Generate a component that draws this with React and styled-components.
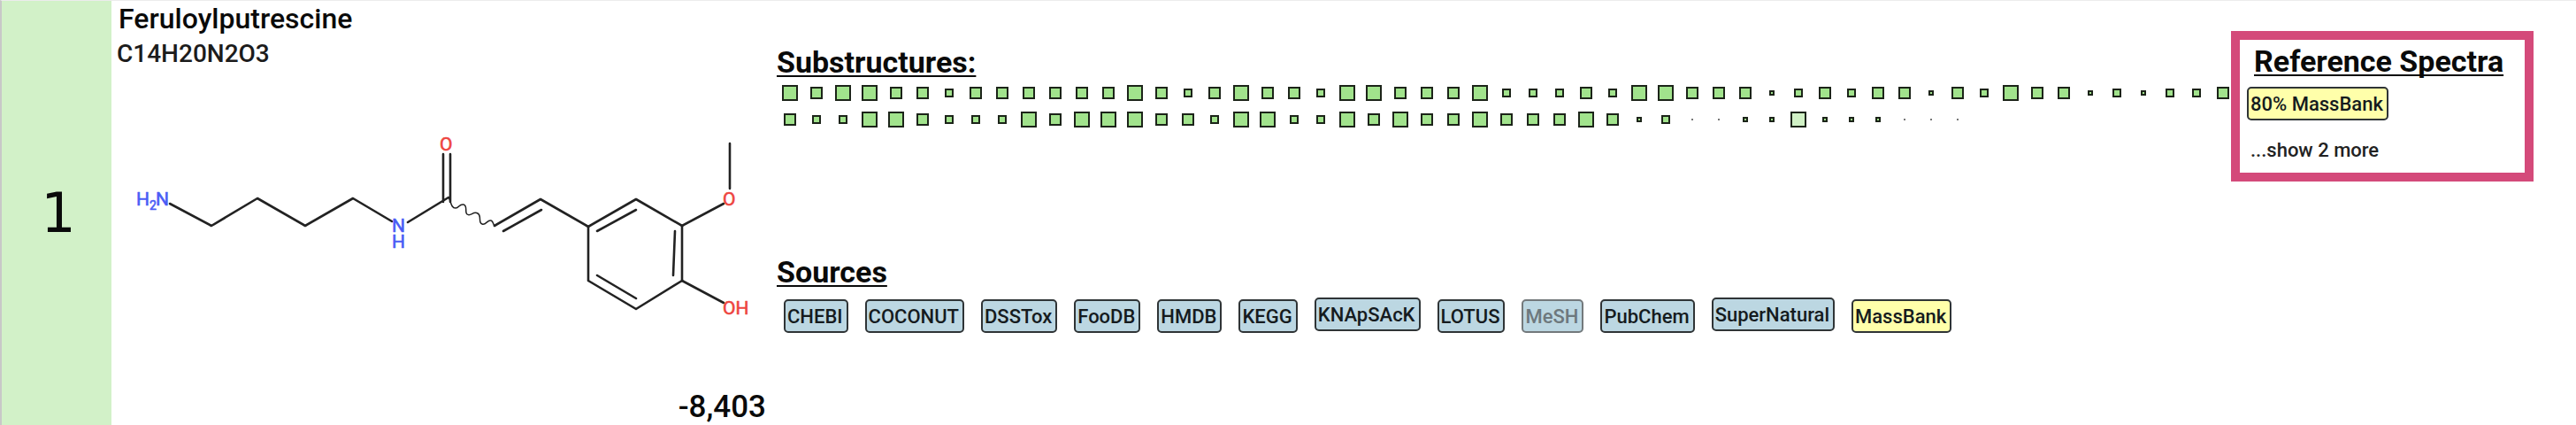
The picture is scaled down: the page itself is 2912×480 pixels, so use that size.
import React from "react";
import styled, { createGlobalStyle } from "styled-components";

const GlobalStyle = createGlobalStyle`
  *, *::before, *::after { box-sizing: border-box; }
  body {
    margin: 0;
    background: #fff;
    color: #0a0a0a;
    font-family: Roboto, "Liberation Sans", sans-serif;
    font-weight: 500;
  }
  h2, h3, p, ul { margin: 0; padding: 0; }
  button { font: inherit; color: inherit; cursor: pointer; }
`;

const CandidateRow = styled.article`
  display: flex;
  min-height: 100vh;
  border-top: 1px solid #ececec;
  border-left: 2px solid #c8c8c8;
`;

const Rank = styled.div`
  flex: 0 0 124px;
  display: flex;
  align-items: center;
  justify-content: center;
  padding-left: 4px;
  background: #d2f1c8;
  font: 400 62px/72px "DejaVu Sans", sans-serif;
`;

const StructurePanel = styled.section`
  flex: 0 0 752px;
  display: flex;
  flex-direction: column;
  padding: 0 12px 0 6px;
`;

const Name = styled.h2`
  padding-left: 2px;
  font-size: 32px;
  line-height: 40px;
  font-weight: 500;
`;

const Formula = styled.p`
  font-size: 28px;
  line-height: 40px;
  color: #1c1c1c;
`;

const Molecule = styled.svg`
  display: block;
  width: 720px;
  height: 230px;
  margin: 59px 0 0 8px;
  overflow: visible;
  fill: none;
  stroke: #222;
  stroke-width: 2.6;
  stroke-linecap: round;
  stroke-linejoin: round;
`;

const Atom = styled.text`
  font: 400 21px Roboto, sans-serif;
  fill: ${(p) => p.$color};
  stroke: ${(p) => p.$color};
  stroke-width: 0.6;
`;

const Subscript = styled.tspan`
  font-size: 14px;
`;

const Score = styled.p`
  margin-top: auto;
  align-self: flex-end;
  font-size: 35px;
  line-height: 40px;
`;

const Details = styled.div`
  flex: 1 1 0;
  min-width: 0;
  padding-top: 49px;
`;

const Heading = styled.h3`
  font-size: 34px;
  line-height: 40px;
  font-weight: 700;
  text-decoration: underline;
  text-decoration-thickness: 2px;
  text-underline-offset: 3px;
  text-decoration-skip-ink: none;
`;

const Fingerprint = styled.div`
  display: grid;
  grid-template-columns: repeat(auto-fill, 30px);
  grid-auto-rows: 30px;
  place-items: center;
  min-height: 197px;
  align-content: start;
`;

const Square = styled.span`
  width: ${(p) => p.$size}px;
  height: ${(p) => p.$size}px;
  border: ${(p) => (p.$size > 2 ? "2px solid #1c2419" : "1px solid #777")};
  background: ${(p) => p.$fill};
`;

const ChipList = styled.ul`
  display: flex;
  flex-wrap: wrap;
  gap: 19px;
  padding: 11px 8px 0;
  list-style: none;
`;

const ChipItem = styled.li`
  margin-top: ${(p) => (p.$raised ? -2 : 0)}px;
`;

const Chip = styled.button`
  display: block;
  height: 38px;
  padding: 2px 4px 0 2px;
  border: 2px solid #2f3436;
  border-radius: 5px;
  background: ${(p) => (p.$reference ? "#ffffaa" : "#bcd7e2")};
  color: #151b1e;
  font-size: 22px;
  line-height: 32px;
  white-space: nowrap;

  &:disabled {
    border-color: #73797c;
    color: #6d787d;
    cursor: default;
  }
`;

const ReferencePanel = styled.aside`
  flex: 0 0 322px;
  align-self: flex-start;
  height: 150px;
  margin: 44px 58px 0 0;
  padding: 4px 8px;
  outline: 10px solid #d44a7a;
`;

const ReferenceTitle = styled(Heading)`
  padding-left: 8px;
  white-space: nowrap;
`;

const ReferenceChip = styled(Chip)`
  margin-top: 9px;
`;

const ShowMore = styled.button`
  display: block;
  margin-top: 18px;
  padding: 0 4px;
  border: 0;
  background: none;
  color: #222;
  font-size: 22px;
  line-height: 32px;
`;

const SIZES = { L: 18, P: 18, M: 14, S: 10, X: 6, D: 2 };
const SUBSTRUCTURES =
  "LMLLMMSMMMMMM" + "LMSMLMMSLLMMM" + "LSSSMSLLMMMXSM" + "SMMXMSLMMXSXSSM" +
  "MSSLLMSSSLMLL" + "LMMSLLSSLMLMM" + "LMMMLMXSDDXXPX" + "XXDDD";

const SOURCES = [
  { name: "CHEBI" },
  { name: "COCONUT" },
  { name: "DSSTox" },
  { name: "FooDB" },
  { name: "HMDB" },
  { name: "KEGG" },
  { name: "KNApSAcK", raised: true },
  { name: "LOTUS" },
  { name: "MeSH", disabled: true },
  { name: "PubChem" },
  { name: "SuperNatural", raised: true },
  { name: "MassBank", reference: true },
];

const BLUE = "#4a5cf5";
const RED = "#ee4540";

function Feruloylputrescine() {
  return (
    <Molecule viewBox="140 140 720 230" role="img" aria-label="Structure of feruloylputrescine">
      <path d="M192 230L239 255L291 224L345 255L399 224L443 250" />
      <path d="M461 251L507 223M501 174V228M509 174V228" />
      <path
        strokeWidth="1.5"
        d="M507 223C510 226 509 235 515 235C519 235 519 230 524 231C529 232 525 240 528 242C532 245 535 238 540 241C545 244 540 251 545 253C549 255 551 248 555 249C558 250 557 253 559 255"
      />
      <path d="M559 255L611 225L665 256M569 261L612 237" />
      <path d="M665 256L719 225L771 255V317L719 349L665 317Z" />
      <path d="M675 261L719 237M763 261L761 311M675 311L719 337" />
      <path d="M771 255L818 230M825 162V213M771 317L818 342" />
      <Atom $color={BLUE} x="154" y="232">
        H<Subscript x="169" y="237">2</Subscript><tspan x="176" y="232">N</tspan>
      </Atom>
      <Atom $color={BLUE} x="443" y="262">
        N<tspan x="443" y="280">H</tspan>
      </Atom>
      <Atom $color={RED} x="497" y="170">O</Atom>
      <Atom $color={RED} x="817" y="232">O</Atom>
      <Atom $color={RED} x="817" y="355">OH</Atom>
    </Molecule>
  );
}

export default function App() {
  return (
    <>
      <GlobalStyle />
      <CandidateRow>
        <Rank>1</Rank>
        <StructurePanel>
          <Name>Feruloylputrescine</Name>
          <Formula>C14H20N2O3</Formula>
          <Feruloylputrescine />
          <Score>-8,403</Score>
        </StructurePanel>
        <Details>
          <Heading>Substructures:</Heading>
          <Fingerprint>
            {[...SUBSTRUCTURES].map((code, i) => (
              <Square key={i} $size={SIZES[code]} $fill={code === "P" ? "#d0f1c5" : "#a1e38c"} />
            ))}
          </Fingerprint>
          <Heading>Sources</Heading>
          <ChipList>
            {SOURCES.map((s) => (
              <ChipItem key={s.name} $raised={s.raised}>
                <Chip type="button" disabled={s.disabled} $reference={s.reference}>{s.name}</Chip>
              </ChipItem>
            ))}
          </ChipList>
        </Details>
        <ReferencePanel>
          <ReferenceTitle>Reference Spectra</ReferenceTitle>
          <ReferenceChip type="button" $reference>80% MassBank</ReferenceChip>
          <ShowMore type="button">...show 2 more</ShowMore>
        </ReferencePanel>
      </CandidateRow>
    </>
  );
}
